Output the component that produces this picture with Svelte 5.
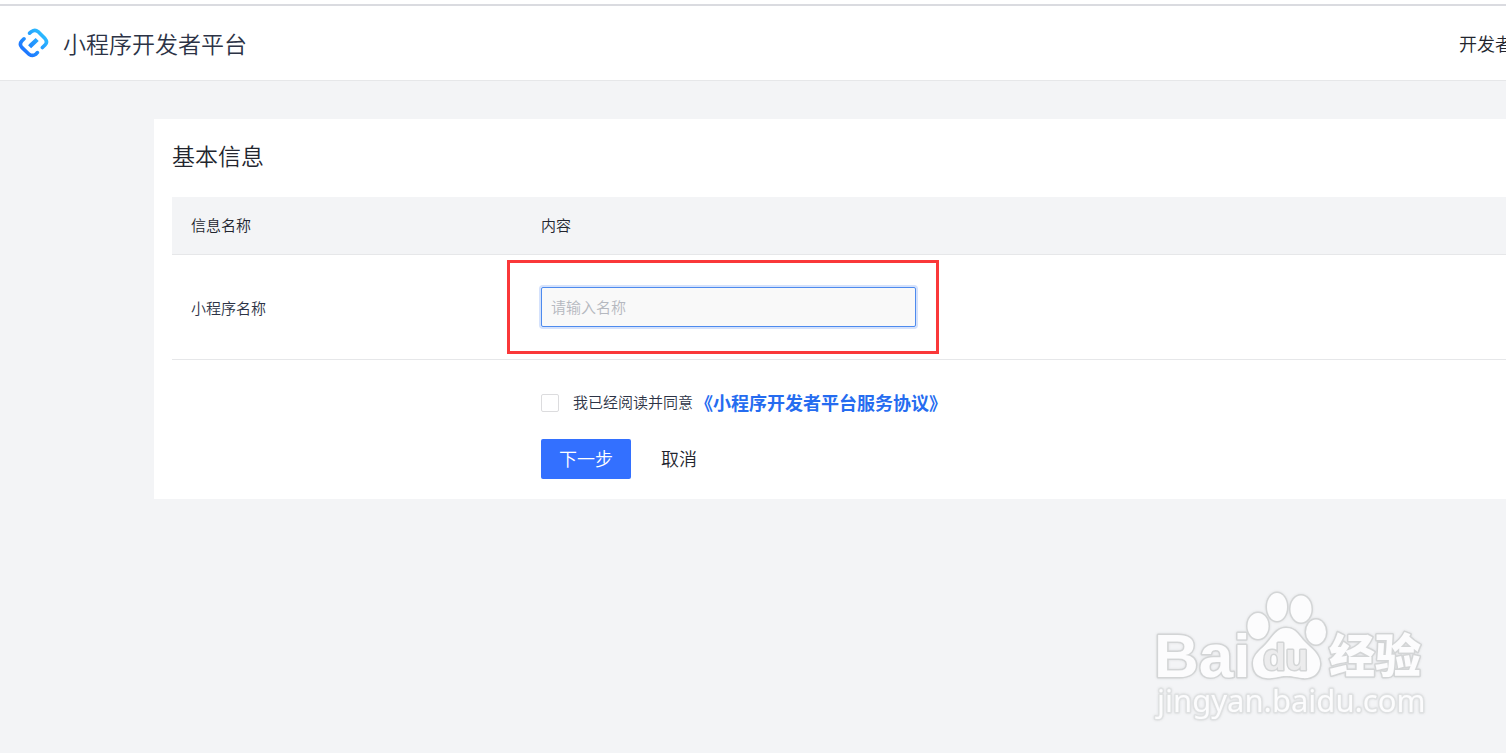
<script>
  let name = $state('');
  let agreed = $state(false);
</script>

<div class="page">
  <header class="topbar">
    <a class="brand" href="#home">
      <svg class="logo" viewBox="0 0 32 32" aria-hidden="true">
        <defs>
          <linearGradient id="brandBlue" gradientUnits="userSpaceOnUse" x1="5" y1="27" x2="27" y2="5">
            <stop offset="0" stop-color="#1b6dff" />
            <stop offset="1" stop-color="#2cc0ff" />
          </linearGradient>
        </defs>
        <g fill="none" stroke="url(#brandBlue)" stroke-width="3.6" stroke-linecap="round" stroke-linejoin="round">
          <path d="M12.600 6.200 L14.400 4.600 Q18 2 21 4.600 L28 11.600 Q31 15 28 18 L25.400 20.600" />
          <path d="M7 11.800 L4.800 14 Q2 17.200 4.800 20.400 L12 27.200 Q15.600 29.600 18.600 27.400 L20.400 25.600" />
          <path d="M14.200 18.200 L18.600 14" stroke-width="4.400" stroke-linecap="square" />
        </g>
      </svg>
      <span>小程序开发者平台</span>
    </a>
    <nav><a href="#developer">开发者</a></nav>
  </header>

  <main>
    <form class="card" onsubmit={(e) => e.preventDefault()}>
      <h1>基本信息</h1>
      <table>
        <thead>
          <tr><th class="label-col">信息名称</th><th>内容</th></tr>
        </thead>
        <tbody>
          <tr>
            <td><label for="app-name">小程序名称</label></td>
            <td>
              <div class="field">
                <input id="app-name" type="text" placeholder="请输入名称" bind:value={name} />
                <span class="highlight"></span>
              </div>
            </td>
          </tr>
        </tbody>
      </table>
      <div class="actions">
        <div class="agreement">
          <input id="agree" type="checkbox" bind:checked={agreed} />
          <label for="agree">我已经阅读并同意</label>
          <a href="#terms">《小程序开发者平台服务协议》</a>
        </div>
        <div class="buttons">
          <button class="primary" type="submit">下一步</button>
          <button class="plain" type="button">取消</button>
        </div>
      </div>
    </form>
  </main>

  <svg class="watermark" viewBox="0 0 300 150" aria-hidden="true">
    <g class="mark">
      <text x="14" y="96" font-size="62" class="latin">Bai</text>
      <ellipse cx="118" cy="45" rx="10.500" ry="13" />
      <ellipse cx="137" cy="26" rx="10" ry="14" />
      <ellipse cx="161" cy="28" rx="10.500" ry="13.500" />
      <ellipse cx="176" cy="51" rx="10" ry="12.500" />
      <path d="M146 47 C156 47 159 55 165 61 C172 68 181 74 180 84 C179 94 171 98 162 97 C155 96 152 95 146 95 C139 95 135 98 126 97 C117 96 113 90 113 82 C113 73 122 68 127 62 C133 55 137 47 146 47 Z" />
      <text x="123" y="89" font-size="37" class="du">du</text>
      <text x="189" y="91" font-size="46" class="han">经验</text>
      <text x="17" y="131" font-size="31" class="site">jingyan.baidu.com</text>
    </g>
  </svg>
</div>

<style>
  :global(body) {
    background: #f3f4f6;
  }
  .page {
    position: relative;
    min-height: 100vh;
    overflow: hidden;
    box-sizing: border-box;
    font-family: 'Noto Sans CJK SC', sans-serif;
    font-weight: 350;
    font-size: 15px;
    color: #22252e;
  }
  .page * {
    box-sizing: border-box;
  }
  .page::before {
    content: '';
    display: block;
    height: 4px;
    background: #fff;
    border-bottom: 2px solid #dadbe0;
  }
  a {
    color: inherit;
    text-decoration: none;
  }
  button,
  input {
    font: inherit;
  }
  .topbar {
    display: flex;
    align-items: center;
    justify-content: space-between;
    height: 75px;
    padding: 0 0 1px 17px;
    background: #fff;
    border-bottom: 1px solid #e6e7e9;
  }
  .brand {
    display: flex;
    align-items: center;
    gap: 14px;
    font-size: 23px;
    line-height: 32px;
    color: #2c3346;
  }
  .logo {
    width: 32px;
    height: 32px;
  }
  nav {
    width: 47px;
    font-size: 18px;
    line-height: 28px;
    white-space: nowrap;
  }
  main {
    padding: 38px 0 0 154px;
  }
  .card {
    padding: 18px 0 20px 18px;
    background: #fff;
  }
  h1 {
    margin: 0 0 24px;
    font-size: 23px;
    font-weight: 350;
    line-height: 36px;
  }
  table {
    width: 100%;
    border-collapse: separate;
    border-spacing: 0;
    table-layout: fixed;
  }
  th,
  td {
    padding: 0 19px 2px;
    border-bottom: 1px solid #e6e7e9;
    text-align: left;
    font-weight: 350;
  }
  th {
    height: 58px;
    background: #f3f4f6;
  }
  td {
    height: 105px;
    padding-bottom: 0;
    color: #2c3346;
  }
  .label-col {
    width: 350px;
  }
  .field {
    position: relative;
    max-width: 375px;
  }
  .field input {
    display: block;
    width: 100%;
    height: 40px;
    padding: 0 9px 1px;
    border: 1px solid #4e8bee;
    border-radius: 2px;
    outline: none;
    background: #f9f9f9;
    box-shadow: 0 0 0 2px #d5e2fc;
    color: #22252e;
  }
  .field input::placeholder {
    color: #b5b8bf;
    opacity: 1;
  }
  .highlight {
    position: absolute;
    inset: -27px -23px -27px -34px;
    border: 3px solid #fa3839;
    pointer-events: none;
  }
  .actions {
    display: grid;
    gap: 22px;
    padding: 29px 0 0 369px;
  }
  .agreement {
    display: flex;
    align-items: center;
    height: 28px;
    line-height: 26px;
    color: #2c3346;
  }
  .agreement input {
    appearance: none;
    width: 18px;
    height: 18px;
    margin: 0 14px 0 0;
    border: 1px solid #dcdcde;
    border-radius: 2px;
    background: #fff;
  }
  .agreement input:checked {
    background: #3370ff;
  }
  .agreement label,
  .agreement a {
    padding-bottom: 2px;
  }
  .agreement a {
    margin-left: 2px;
    font-size: 18px;
    font-weight: 700;
    color: #256cf0;
  }
  .buttons {
    display: flex;
    gap: 12px;
  }
  button {
    height: 40px;
    padding: 0 18px 2px;
    border: 0;
    border-radius: 2px;
    font-size: 18px;
    cursor: pointer;
  }
  .primary {
    background: #3370ff;
    color: #fff;
  }
  .plain {
    background: transparent;
    color: #22252e;
  }
  .watermark {
    position: absolute;
    right: 66px;
    bottom: 22px;
    width: 300px;
    height: 150px;
    pointer-events: none;
  }
  .mark {
    fill: #fcfcfd;
    stroke: #d3d5d6;
    stroke-width: 3px;
    stroke-linejoin: round;
    paint-order: stroke;
    filter: drop-shadow(0 0 1px #dcdddf);
  }
  .latin {
    font-family: 'Liberation Sans', sans-serif;
    font-weight: 700;
  }
  .du {
    font-family: 'Liberation Sans', sans-serif;
    font-weight: 700;
    fill: #ececed;
  }
  .han {
    font-weight: 900;
  }
  .site {
    font-family: 'Noto Sans', sans-serif;
    font-weight: 400;
    stroke: #dfe1e2;
  }
</style>
